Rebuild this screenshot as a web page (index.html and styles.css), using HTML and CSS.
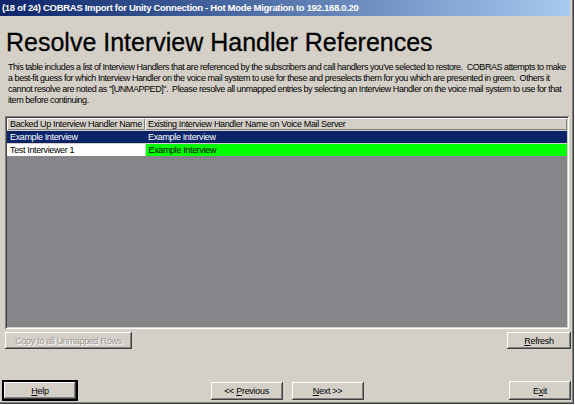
FILE: index.html
```html
<!DOCTYPE html>
<html lang="en">
<head>
<meta charset="UTF-8" />
<title>COBRAS Import for Unity Connection</title>
<link rel="stylesheet" href="styles.css">
</head>
<body>

<div class="window">
  <div class="titlebar">(18 of 24) COBRAS Import for Unity Connection - Hot Mode Migration to 192.168.0.20</div>

  <div class="panel">
    <h1>Resolve Interview Handler References</h1>

    <p class="intro">
      This table includes a list of Interview Handlers that are referenced by the subscribers and call handlers you've selected to restore.&nbsp; COBRAS attempts to make<br>
      a best-fit guess for which Interview Handler on the voice mail system to use for these and preselects them for you which are presented in green.&nbsp; Others it<br>
      cannot resolve are noted as "[UNMAPPED]".&nbsp; Please resolve all unmapped entries by selecting an Interview Handler on the voice mail system to use for that<br>
      item before continuing.
    </p>

    <div class="grid">
      <table>
        <tr>
          <th class="col-backup">Backed Up Interview Handler Name</th>
          <th>Existing Interview Handler Name on Voice Mail Server</th>
        </tr>
        <tr class="selected">
          <td>Example Interview</td>
          <td>Example Interview</td>
        </tr>
        <tr>
          <td>Test Interviewer 1</td>
          <td class="mapped">Example Interview</td>
        </tr>
      </table>
    </div>

    <div class="grid-actions">
      <button class="btn btn-copy" disabled>Copy to all Unmapped Rows</button>
      <button class="btn btn-refresh"><u>R</u>efresh</button>
    </div>

    <div class="nav-buttons">
      <button class="btn btn-default btn-help"><u>H</u>elp</button>
      <div class="nav-middle">
        <button class="btn btn-nav">&lt;&lt; <u>P</u>revious</button>
        <button class="btn btn-nav"><u>N</u>ext &gt;&gt;</button>
      </div>
      <button class="btn btn-exit">E<u>x</u>it</button>
    </div>
  </div>
</div>

</body>
</html>
```

FILE: styles.css
```css
body {
  margin: 0;
  background: #fff;
  font-family: 'Liberation Sans', Arial, sans-serif;
}
.window {
  width: 574px;
  height: 404px;
  box-sizing: border-box;
  background: #d4d0c8;
  box-shadow: inset -1px -1px #404040, inset -2px -2px #808080;
  display: flex;
  flex-direction: column;
}
.titlebar {
  height: 16px;
  margin-right: 4px;
  padding-left: 2px;
  background: linear-gradient(to right, #0a246a, #a6caf0);
  color: #fff;
  font-weight: bold;
  font-size: 9.5px;
  letter-spacing: -0.3px;
  line-height: 16px;
  white-space: nowrap;
}
.panel {
  flex: 1;
  display: flex;
  flex-direction: column;
  padding: 0 3px 4px 3px;
}
h1 {
  margin: 12px 0 0 3px;
  font-size: 25px;
  font-weight: normal;
  line-height: 28px;
  color: #000;
  -webkit-text-stroke: 0.3px #000;
}
.intro {
  margin: 6px 0 0 5px;
  font-size: 9px;
  letter-spacing: -0.45px;
  line-height: 11px;
  color: #000;
  white-space: nowrap;
}

/* table area */
.grid {
  margin: 10px 2px 0 2px;
  height: 213px;
  box-sizing: border-box;
  background: #868589;
  box-shadow: inset 1px 1px #808080, inset -1px -1px #fff, inset 2px 2px #404040, inset -2px -2px #d4d0c8;
  padding: 2px;
}
.grid table {
  width: 100%;
  border-collapse: collapse;
  font-size: 9px;
  letter-spacing: -0.35px;
}
.grid th, .grid td {
  padding: 0 3px;
  text-align: left;
  white-space: nowrap;
  font-weight: normal;
}
.grid th {
  height: 12px;
  background: #d4d0c8;
  box-shadow: inset 1px 1px #fff, inset -1px -1px #808080;
}
.grid td {
  height: 12px;
  background: #fff;
  border-top: 1px solid #d4d0c8;
}
.col-backup {
  width: 132px;
}
.grid tr.selected td {
  background: #0a246a;
  color: #fff;
}
.grid td.mapped {
  background: #00ff00;
  border-left: 1px solid #d4d0c8;
}

/* buttons */
.btn {
  height: 17px;
  padding: 0;
  border: none;
  background: #d4d0c8;
  box-shadow: inset -1px -1px #404040, inset 1px 1px #fff, inset -2px -2px #808080, inset 2px 2px #d4d0c8;
  font-family: 'Liberation Sans', Arial, sans-serif;
  font-size: 9px;
  letter-spacing: -0.3px;
  color: #000;
}
.btn:disabled {
  color: #9a9893;
  text-shadow: 1px 1px #fff;
}
.grid-actions {
  display: flex;
  justify-content: space-between;
  margin: 3px 0 0 2px;
}
.btn-copy {
  width: 127px;
}
.btn-refresh {
  width: 64px;
}
.nav-buttons {
  margin-top: auto;
  display: grid;
  grid-template-columns: 1fr auto 1fr;
  align-items: center;
}
.nav-middle {
  display: flex;
  gap: 9px;
}
.btn-default {
  outline: 1px solid #000;
  outline-offset: 0;
  box-shadow: inset 1px 1px #000, inset -1px -1px #000, inset -2px -2px #404040, inset 2px 2px #fff, inset -3px -3px #808080;
  height: 19px;
}
.btn-help {
  width: 74px;
  justify-self: start;
}
.btn-nav {
  width: 72px;
  height: 18px;
}
.btn-exit {
  width: 62px;
  height: 19px;
  justify-self: end;
}
```
